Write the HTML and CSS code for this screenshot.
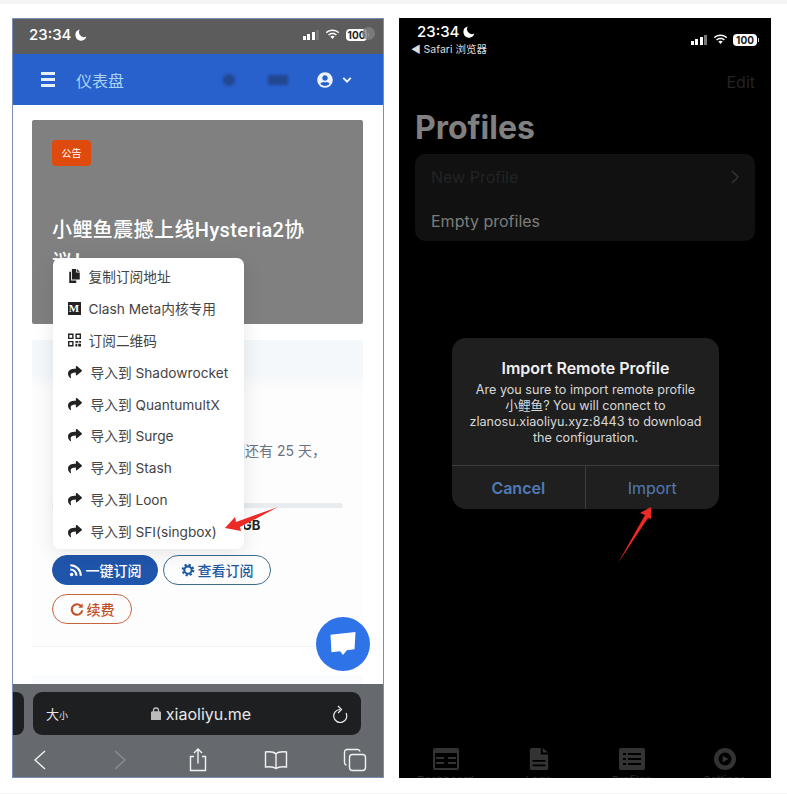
FILE: index.html
```html
<!DOCTYPE html>
<html>

<head>
    <title>Import profile steps</title>
    <link rel="stylesheet" href="styles.css">
</head>

<body>
    <svg class="defs" width="0" height="0">
        <symbol id="share" viewBox="0 0 512 512"><path d="M503.691 189.836L327.687 37.851C312.281 24.546 288 35.347 288 56.015v80.053C127.371 137.907 0 170.1 0 322.326c0 61.441 39.581 122.309 83.333 154.132 13.653 9.931 33.111-2.533 28.077-18.631C66.066 312.814 132.917 274.316 288 272.085V360c0 20.7 24.3 31.453 39.687 18.164l176-152c11.071-9.562 11.086-26.753 0-36.328z"/></symbol>
        <symbol id="wifi" viewBox="0 0 18 13"><path d="M9 2.400c2.600 0 5 1 6.800 2.700l1.200-1.300C14.900 1.800 12.100.6 9 .6S3.100 1.800 1 3.800l1.200 1.300C4 3.400 6.400 2.400 9 2.400z"/><path d="M9 6.100c1.600 0 3 .6 4.100 1.600l1.200-1.300C12.900 5.100 11 4.300 9 4.300s-3.900.8-5.300 2.100l1.200 1.300C6 6.700 7.400 6.100 9 6.100z"/><path d="M9 8c-1 0-1.900.4-2.600 1L9 12l2.600-3C10.900 8.400 10 8 9 8z"/></symbol>
        <symbol id="moon" viewBox="0 0 12 12"><path d="M4.800.6A5.600 5.600 0 1 0 11.400 7.600 5 5 0 0 1 4.800.6z"/></symbol>
    </svg>

    <div class="strip"></div>

    <div class="screens">
        <!-- Left phone: website and dropdown -->
        <div class="phone phone-web">
            <div class="status status-web">
                <div class="clock">23:34 <svg class="moon"><use href="#moon"/></svg></div>
                <div class="status-right">
                    <div class="signal"><i></i><i></i><i></i><i class="off"></i></div>
                    <svg class="wifi"><use href="#wifi"/></svg>
                    <div class="battery">100</div>
                </div>
            </div>

            <div class="nav">
                <div class="burger"><i></i><i></i><i></i></div>
                <div class="nav-title">仪表盘</div>
                <div class="nav-blot round"></div>
                <div class="nav-blot wide"></div>
                <svg class="nav-user" viewBox="0 0 496 512"><path d="M248 8C111 8 0 119 0 256s111 248 248 248 248-111 248-248S385 8 248 8zm0 96c48.600 0 88 39.400 88 88s-39.400 88-88 88-88-39.400-88-88 39.400-88 88-88zm0 344c-58.700 0-111.300-26.600-146.500-68.200 18.800-35.400 55.600-59.800 98.500-59.800 2.400 0 4.800.4 7.100 1.100 13 4.200 26.600 6.900 40.900 6.900 14.300 0 28-2.700 40.900-6.900 2.300-.7 4.700-1.100 7.100-1.100 42.900 0 79.700 24.400 98.500 59.800C359.300 421.400 306.700 448 248 448z"/></svg>
                <svg class="nav-chevron" viewBox="0 0 12 8"><path d="M1.500 1.500 6 6l4.500-4.500"/></svg>
            </div>

            <div class="content">
                <div class="notice">
                    <span class="badge">公告</span>
                    <div class="notice-title">小鲤鱼震撼上线Hysteria2协议！</div>
                </div>

                <div class="plan">
                    <div class="plan-head"></div>
                    <div class="plan-body">
                        <p class="plan-text">到期还有 25 天，</p>
                        <div class="progress"></div>
                        <p class="plan-usage">GB</p>
                        <div class="plan-buttons">
                            <span class="btn btn-solid">
                                <svg class="btn-icon" viewBox="0 0 16 16"><circle cx="3" cy="13" r="2" class="fill"/><path d="M1.500 7.500a7 7 0 0 1 7 7M1.500 2.500a12 12 0 0 1 12 12"/></svg>
                                一键订阅
                            </span>
                            <span class="btn btn-blue">
                                <svg class="btn-icon" viewBox="0 0 16 16"><circle cx="8" cy="8" r="4.200"/><circle cx="8" cy="8" r="6" class="cog-teeth"/></svg>
                                查看订阅
                            </span>
                            <span class="btn btn-orange">
                                <svg class="btn-icon" viewBox="0 0 16 16"><path d="M13 5.200A6 6 0 1 0 14 9.500"/><path d="M14.500 1.500v5h-5z" class="fill"/></svg>
                                续费
                            </span>
                        </div>
                    </div>
                </div>
                <div class="plan-next"></div>
            </div>

            <div class="safari">
                <div class="url-row">
                    <div class="tab-peek"></div>
                    <div class="url-bar">
                        <span class="text-size">大<small>小</small></span>
                        <span class="url">
                            <svg class="lock" viewBox="0 0 10 13"><rect x="0.500" y="5" width="9" height="8" rx="1.200" class="lock-body"/><path d="M2.500 5.500V3.500a2.500 2.500 0 0 1 5 0v2"/></svg>
                            xiaoliyu.me
                        </span>
                        <svg class="reload" viewBox="0 0 16 18"><path d="M14 8A6.500 6.500 0 1 1 8 4.500"/><path d="M6 1l3.500 3.500L6 8"/></svg>
                    </div>
                </div>
                <div class="safari-tools">
                    <svg class="tool" viewBox="0 0 24 24"><path d="M16 3 6 12l10 9"/></svg>
                    <svg class="tool dim" viewBox="0 0 24 24"><path d="M8 3l10 9-10 9"/></svg>
                    <svg class="tool" viewBox="0 0 24 24"><path d="M8 8.500H4.500v14h15v-14H16M12 15.500V1.500M8 5l4-4 4 4"/></svg>
                    <svg class="tool" viewBox="0 0 24 24"><path d="M12 6C10 4 6 3.500 1.500 4v15c4.500-.5 8.500 0 10.500 1.500 2-1.500 6-2 10.500-1.500V4C18 3.500 14 4 12 6zM12 6v14"/></svg>
                    <svg class="tool" viewBox="0 0 24 24"><rect x="6.500" y="6.500" width="16" height="16" rx="3"/><path d="M3.500 17A2.500 2.500 0 0 1 1.500 14.500V4A2.500 2.500 0 0 1 4 1.500h10.500A2.500 2.500 0 0 1 17 3.500"/></svg>
                </div>
            </div>

            <!-- Things lying over the page -->
            <ul class="menu">
                <li>
                    <svg class="menu-icon" viewBox="0 0 14 16"><path d="M4 0h5v4h4v8H4zM10 0l3 3h-3zM3 3v10h6v3H1V3z"/></svg>
                    复制订阅地址
                </li>
                <li>
                    <span class="medium-icon">M</span>
                    Clash Meta内核专用
                </li>
                <li>
                    <svg class="menu-icon" viewBox="0 0 14 14"><path fill-rule="evenodd" d="M0 0h6v6H0zM1.500 1.500v3h3v-3zM8 0h6v6H8zM9.500 1.500v3h3v-3zM0 8h6v6H0zM1.500 9.500v3h3v-3zM8 8h3v2H8zM12 8h2v2h-2zM8 11h2v3H8zM11 11h3v3h-3z"/></svg>
                    订阅二维码
                </li>
                <li class="import"><svg class="menu-share"><use href="#share"/></svg>导入到 Shadowrocket</li>
                <li class="import"><svg class="menu-share"><use href="#share"/></svg>导入到 QuantumultX</li>
                <li class="import"><svg class="menu-share"><use href="#share"/></svg>导入到 Surge</li>
                <li class="import"><svg class="menu-share"><use href="#share"/></svg>导入到 Stash</li>
                <li class="import"><svg class="menu-share"><use href="#share"/></svg>导入到 Loon</li>
                <li class="import"><svg class="menu-share"><use href="#share"/></svg>导入到 SFI(singbox)</li>
            </ul>

            <svg class="arrow arrow-left" viewBox="0 0 55 30"><path d="M54 1 16 21l1 4-16-3 10-11 1 5z"/></svg>

            <div class="fab">
                <svg viewBox="0 0 28 26"><path d="M1 4 27 1l-1 18-8 1-4 5-3-4-9 1z"/></svg>
            </div>
        </div>

        <!-- Right phone: app and alert -->
        <div class="phone phone-app">
            <div class="status status-app">
                <div>
                    <div class="clock">23:34 <svg class="moon"><use href="#moon"/></svg></div>
                    <div class="back-app">◀ Safari 浏览器</div>
                </div>
                <div class="status-right">
                    <div class="signal"><i></i><i></i><i></i><i class="off"></i></div>
                    <svg class="wifi"><use href="#wifi"/></svg>
                    <div class="battery">100</div>
                </div>
            </div>

            <div class="edit">Edit</div>
            <h1 class="profiles">Profiles</h1>

            <div class="list">
                <div class="list-row dark">
                    New Profile
                    <svg class="list-chevron" viewBox="0 0 8 14"><path d="M1 1l6 6-6 6"/></svg>
                </div>
                <div class="list-row">Empty profiles</div>
            </div>

            <div class="tabbar">
                <div class="tab">
                    <svg viewBox="0 0 26 22"><path fill-rule="evenodd" d="M2 0h22a2 2 0 0 1 2 2v18a2 2 0 0 1-2 2H2a2 2 0 0 1-2-2V2a2 2 0 0 1 2-2zM2 5v15h22V5zM3 9h8v2H3zM3 14h8v2H3zM15 9h8v2h-8zM15 14h8v2h-8z"/></svg>
                    Dashboard
                </div>
                <div class="tab">
                    <svg viewBox="0 0 20 24"><path fill-rule="evenodd" d="M2 0h10v7h8v15a2 2 0 0 1-2 2H2a2 2 0 0 1-2-2V2a2 2 0 0 1 2-2zM14 0l6 5h-6zM3 13v2h14v-2zM3 18v2h14v-2z"/></svg>
                    Logs
                </div>
                <div class="tab">
                    <svg viewBox="0 0 26 22"><path fill-rule="evenodd" d="M2 0h22a2 2 0 0 1 2 2v18a2 2 0 0 1-2 2H2a2 2 0 0 1-2-2V2a2 2 0 0 1 2-2zM4 5v2h3V5zM9 5v2h13V5zM4 10v2h3v-2zM9 10v2h13v-2zM4 15v2h3v-2zM9 15v2h13v-2z"/></svg>
                    Profiles
                </div>
                <div class="tab">
                    <svg viewBox="0 0 24 24"><path fill-rule="evenodd" d="M12 0a12 12 0 1 1 0 24 12 12 0 0 1 0-24zM12 5a7 7 0 1 0 0 14 7 7 0 0 0 0-14zM9.500 8.500l6.500 3.500-6.500 3.500z"/></svg>
                    Settings
                </div>
            </div>

            <div class="alert">
                <div class="alert-body">
                    <div class="alert-title">Import Remote Profile</div>
                    <p class="alert-text">Are you sure to import remote profile<br>小鲤鱼? You will connect to<br>zlanosu.xiaoliyu.xyz:8443 to download<br>the configuration.</p>
                </div>
                <div class="alert-actions">
                    <div class="alert-btn cancel">Cancel</div>
                    <div class="alert-btn">Import</div>
                </div>
            </div>

            <svg class="arrow arrow-up" viewBox="0 0 36 58"><path d="M34 1 23 7l5 2L1 57 31 12l3 1z"/></svg>
        </div>
    </div>

    <div class="strip strip-bottom"></div>
</body>

</html>
```

FILE: styles.css
```css
* {
    box-sizing: border-box;
}

html,
body {
    margin: 0;
    height: 794px;
    overflow: hidden;
    background-color: #fff;
    font-family: Inter, "Noto Sans CJK SC", sans-serif;
}

.defs {
    position: absolute;
}

.strip {
    height: 4px;
    background-color: #f4f4f4;
}

.strip-bottom {
    margin-top: 15px;
    height: 1px;
}

.screens {
    display: flex;
    gap: 15px;
    padding: 14px 0 0 12px;
}

.phone {
    position: relative;
    height: 760px;
    overflow: hidden;
}

/* Left phone */
.phone-web {
    display: flex;
    flex-direction: column;
    width: 372px;
    border: 1.5px solid #7a8eb6;
    background-color: #fff;
}

.status {
    display: flex;
    justify-content: space-between;
    color: #fff;
}

.status-web {
    position: relative;
    align-items: center;
    flex: none;
    height: 35px;
    padding: 0 16px 4px 16px;
    background-color: #5c5c5c;
}

/* blurred button sitting on the battery */
.status-web::after {
    content: "";
    position: absolute;
    top: 8px;
    right: 8px;
    width: 13px;
    height: 13px;
    border-radius: 50%;
    background-color: rgba(130, 130, 130, 0.8);
}

.clock {
    display: flex;
    align-items: center;
    gap: 4px;
    font-size: 15px;
    font-weight: 500;
    line-height: 18px;
}

.moon {
    width: 12px;
    height: 12px;
    fill: #fff;
}

.status-right {
    display: flex;
    align-items: center;
    gap: 6px;
}

.signal {
    display: flex;
    align-items: flex-end;
    gap: 1.7px;
    height: 10px;
}

.signal i {
    width: 2.800px;
    height: 4px;
    background-color: #fff;
}

.signal i:nth-child(2) {
    height: 6px;
}

.signal i:nth-child(3) {
    height: 8px;
}

.signal i.off {
    height: 10px;
    background-color: #777;
}

.wifi {
    width: 15px;
    height: 11px;
    fill: #fff;
}

.battery {
    position: relative;
    width: 21px;
    height: 12px;
    border-radius: 4px;
    background-color: #fff;
    color: #222;
    font-size: 10px;
    font-weight: 700;
    line-height: 12px;
    text-align: center;
}

.battery::after {
    content: "";
    position: absolute;
    top: 4px;
    right: -2px;
    width: 1px;
    height: 4px;
    background-color: #ccc;
}

.nav {
    display: flex;
    align-items: center;
    flex: none;
    height: 51px;
    padding-left: 28px;
    background-color: #2860cc;
}

.burger {
    display: flex;
    flex-direction: column;
    gap: 3px;
    width: 14px;
}

.burger i {
    height: 3px;
    background-color: #e4f1fb;
}

.nav-title {
    margin-left: 21px;
    width: 147px;
    color: #a9d3f3;
    font-size: 16px;
}

.nav-blot {
    height: 12px;
    background-color: #22488f;
    filter: blur(1.5px);
}

.nav-blot.round {
    width: 12px;
    border-radius: 50%;
}

.nav-blot.wide {
    margin-left: 33px;
    width: 20px;
    height: 10px;
}

.nav-user {
    margin-left: 29px;
    width: 16px;
    height: 16px;
    fill: #eef4fb;
}

.nav-chevron {
    margin-left: 9px;
    width: 10px;
    height: 8px;
    fill: none;
    stroke: #eef4fb;
    stroke-width: 2.400;
}

.content {
    flex: 1;
    overflow: hidden;
    padding: 14.500px 20px 0 19px;
}

.notice {
    height: 204px;
    padding: 20px;
    border-radius: 2px;
    background-color: #808080;
    color: #fff;
}

.badge {
    display: block;
    width: 39px;
    height: 26px;
    border-radius: 4px;
    background-color: #df4a0e;
    font-size: 10px;
    line-height: 26px;
    text-align: center;
}

.notice-title {
    width: 258px;
    margin-top: 48px;
    font-family: Roboto, "Noto Sans CJK SC", sans-serif;
    font-size: 20px;
    font-weight: 500;
    letter-spacing: 0.4px;
    line-height: 32px;
}

.plan {
    margin-top: 16px;
    height: 307px;
    border-bottom: 1px solid #f1f2f3;
    background-color: #fdfdfe;
}

.plan-head {
    height: 50px;
    border-radius: 4px 4px 0 0;
    background-image: linear-gradient(#f5f8fb 70%, #fdfdfe);
}

.plan-body {
    padding: 52px 20px 0;
    color: #6b7280;
}

.plan-text {
    margin: 0;
    padding-left: 165px;
    font-size: 14px;
    line-height: 18px;
}

.progress {
    margin-top: 43px;
    height: 5px;
    border-radius: 3px;
    background-color: #e9ecef;
}

.plan-usage {
    margin: 8px 0 0;
    padding-left: 190px;
    color: #222;
    font-size: 13px;
    font-weight: 700;
    line-height: 18px;
}

.plan-buttons {
    display: flex;
    flex-wrap: wrap;
    gap: 9px 5px;
    margin-top: 21px;
}

.btn {
    display: flex;
    align-items: center;
    justify-content: center;
    gap: 3px;
    height: 30px;
    border: 1px solid;
    border-radius: 15px;
    font-size: 14px;
    font-weight: 500;
}

.btn-icon {
    width: 14px;
    height: 14px;
    fill: none;
    stroke: currentColor;
    stroke-width: 2.400;
}

.btn-icon .fill {
    fill: currentColor;
    stroke: none;
}

.cog-teeth {
    stroke-width: 2.500;
    stroke-dasharray: 2.500 2.200;
}

.btn-solid {
    width: 106px;
    border-color: #1f55ab;
    background-color: #1f55ab;
    color: #fff;
}

.btn-blue {
    width: 108px;
    border-color: #3c6d8c;
    color: #1f5a9e;
}

.btn-orange {
    width: 80px;
    border-color: #c8643c;
    color: #c2512a;
}

.plan-next {
    margin-top: 28px;
    height: 20px;
    background-color: #fafbfc;
}

.safari {
    flex: none;
    height: 93px;
    background-color: #666a6f;
}

.url-row {
    display: flex;
    gap: 9px;
    padding-top: 8px;
}

.tab-peek {
    width: 11px;
    height: 43px;
    border-radius: 0 8px 8px 0;
    background-color: #1e1f20;
}

.url-bar {
    display: flex;
    align-items: center;
    justify-content: space-between;
    width: 328px;
    height: 43px;
    padding: 0 13px;
    border-radius: 9px;
    background-color: #1e1f20;
    color: #e8e8e8;
}

.text-size {
    width: 24px;
    font-size: 13px;
    white-space: nowrap;
}

.text-size small {
    font-size: 9px;
}

.url {
    display: flex;
    align-items: center;
    gap: 5px;
    font-size: 16px;
}

.lock {
    width: 10px;
    height: 13px;
    fill: none;
    stroke: #bbb;
    stroke-width: 1.300;
}

.lock-body {
    fill: #bbb;
}

.reload {
    width: 16px;
    height: 18px;
    fill: none;
    stroke: #eee;
    stroke-width: 1.200;
}

.safari-tools {
    display: flex;
    justify-content: space-between;
    padding: 13px 16.500px 0 15.500px;
}

.tool {
    width: 24px;
    height: 24px;
    fill: none;
    stroke: #f2f2f2;
    stroke-width: 1.400;
}

.tool.dim {
    stroke: #8b8e92;
}

.menu {
    position: absolute;
    top: 238.500px;
    left: 39.500px;
    width: 191px;
    margin: 0;
    padding: 3px 0 2px;
    list-style: none;
    border-radius: 7px;
    background-color: #fff;
    box-shadow: 0 4px 20px rgba(0, 0, 0, 0.1);
}

.menu li {
    display: flex;
    align-items: center;
    gap: 8px;
    height: 31.800px;
    padding-left: 15px;
    color: #444;
    font-size: 13.700px;
    white-space: nowrap;
}

.menu li.import {
    gap: 9px;
}

.menu-icon {
    width: 13px;
    height: 14px;
    fill: #222;
}

.medium-icon {
    width: 13px;
    height: 13px;
    background-color: #222;
    color: #fff;
    font-family: "Liberation Serif", serif;
    font-size: 11px;
    font-weight: 700;
    line-height: 13px;
    text-align: center;
}

.menu-share {
    width: 14px;
    height: 14px;
    fill: #222;
}

.arrow {
    position: absolute;
    fill: #ee2a24;
}

.arrow-left {
    top: 486.500px;
    left: 210.500px;
    width: 55px;
    height: 30px;
}

.fab {
    position: absolute;
    top: 597.500px;
    left: 302.500px;
    display: flex;
    align-items: center;
    justify-content: center;
    width: 54px;
    height: 54px;
    border-radius: 50%;
    background-color: #2f73e8;
}

.fab svg {
    width: 28px;
    height: 25px;
    fill: #fff;
}

/* Right phone */
.phone-app {
    width: 372px;
    background-color: #000;
    color: #fff;
}

.status-app {
    padding: 5px 14px 0 12px;
}

.status-app .clock {
    padding-left: 6px;
}

.status-app .status-right {
    align-self: center;
    gap: 5.500px;
    height: 16px;
}

.status-app .battery {
    width: 24px;
}

.back-app {
    margin-top: 2px;
    color: #ddd;
    font-size: 10.500px;
    line-height: 13px;
}

.edit {
    margin-top: 15px;
    padding-right: 16px;
    color: #242424;
    font-size: 16px;
    line-height: 22px;
    text-align: right;
}

.profiles {
    margin: 15px 0 0 16px;
    color: #808080;
    font-size: 32px;
    font-weight: 700;
    line-height: 40px;
}

.list {
    width: 340px;
    height: 87px;
    margin: 6px 0 0 16px;
    padding: 1px 16px;
    border-radius: 10px;
    background-color: #111;
}

.list-row {
    display: flex;
    align-items: center;
    justify-content: space-between;
    height: 44px;
    color: #7d7d7d;
    font-size: 16px;
}

.list-row.dark {
    color: #232323;
}

.list-chevron {
    width: 8px;
    height: 14px;
    fill: none;
    stroke: #333;
    stroke-width: 1.500;
}

.tabbar {
    position: absolute;
    bottom: -9px;
    left: 0;
    display: grid;
    grid-template-columns: repeat(4, 93px);
    width: 372px;
}

.tab {
    display: flex;
    flex-direction: column;
    align-items: center;
    gap: 4px;
    color: #2c2c2c;
    font-size: 11px;
    line-height: 13px;
}

.tab svg {
    width: 26px;
    height: 22px;
    fill: #333;
}

.alert {
    position: absolute;
    top: 320px;
    left: 53px;
    width: 267px;
    height: 171px;
    border-radius: 14px;
    background-color: #1f1f1f;
}

.alert-body {
    height: 127px;
    padding: 20px 14px 0;
    text-align: center;
}

.alert-title {
    color: #f0f0f0;
    font-size: 16px;
    font-weight: 600;
    line-height: 21px;
}

.alert-text {
    margin: 3px 0 0;
    color: #d8d8d8;
    font-size: 12.600px;
    line-height: 16px;
}

.alert-actions {
    display: grid;
    grid-template-columns: 1fr 1fr;
    height: 44px;
    border-top: 1px solid #3d3d3d;
}

.alert-btn {
    display: flex;
    align-items: center;
    justify-content: center;
    color: #4f7bb8;
    font-size: 16px;
}

.alert-btn.cancel {
    border-right: 1px solid #3d3d3d;
    font-weight: 600;
}

.arrow-up {
    top: 488px;
    left: 218px;
    width: 36px;
    height: 58px;
}
```
